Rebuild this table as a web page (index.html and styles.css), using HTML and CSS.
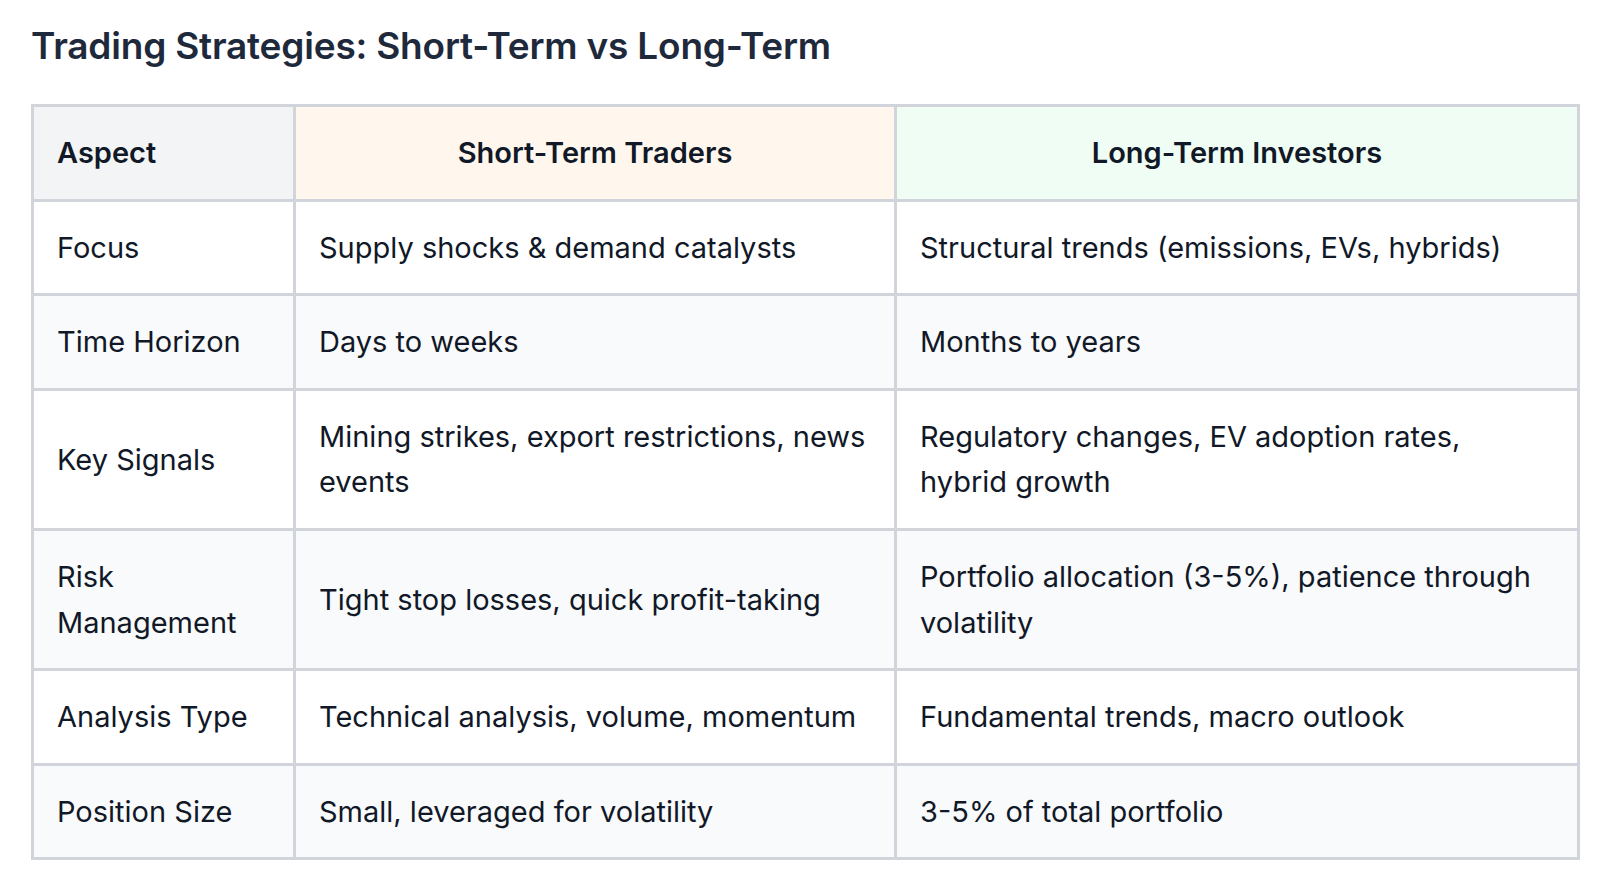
FILE: index.html
```html
<!DOCTYPE html>
<html lang="en">
<head>
<meta charset="utf-8">
<title>Trading Strategies</title>
<link rel="stylesheet" href="styles.css">
</head>
<body>
<main class="page">
  <h1 class="title">Trading Strategies: Short-Term vs Long-Term</h1>
  <table class="compare">
    <colgroup>
      <col class="c-aspect">
      <col class="c-short">
      <col class="c-long">
    </colgroup>
    <thead>
      <tr>
        <th class="h-aspect">Aspect</th>
        <th class="h-short">Short-Term Traders</th>
        <th class="h-long">Long-Term Investors</th>
      </tr>
    </thead>
    <tbody>
      <tr>
        <td>Focus</td>
        <td>Supply shocks &amp; demand catalysts</td>
        <td>Structural trends (emissions, EVs, hybrids)</td>
      </tr>
      <tr>
        <td>Time Horizon</td>
        <td>Days to weeks</td>
        <td>Months to years</td>
      </tr>
      <tr>
        <td>Key Signals</td>
        <td>Mining strikes, export restrictions, news events</td>
        <td>Regulatory changes, EV adoption rates, hybrid growth</td>
      </tr>
      <tr>
        <td>Risk Management</td>
        <td>Tight stop losses, quick profit-taking</td>
        <td>Portfolio allocation (3-5%), patience through volatility</td>
      </tr>
      <tr>
        <td>Analysis Type</td>
        <td>Technical analysis, volume, momentum</td>
        <td>Fundamental trends, macro outlook</td>
      </tr>
      <tr>
        <td>Position Size</td>
        <td>Small, leveraged for volatility</td>
        <td>3-5% of total portfolio</td>
      </tr>
    </tbody>
  </table>
</main>
</body>
</html>
```

FILE: styles.css
```css
* { box-sizing: border-box; }

html, body {
  margin: 0;
  padding: 0;
  background: #ffffff;
}

body {
  font-family: Inter, "Noto Sans", "Liberation Sans", sans-serif;
  color: #111827;
}

.page {
  padding: 20px 20px 0 31px;
}

.title {
  margin: 0 0 32px 0;
  font-size: 37px;
  line-height: 52px;
  font-weight: 600;
  color: #1e293b;
  letter-spacing: -0.2px;
}

.compare {
  width: 1549px;
  table-layout: fixed;
  border-collapse: separate;
  border-spacing: 0;
  border-left: 3px solid #d1d5db;
  border-top: 3px solid #d1d5db;
  font-size: 29px;
  line-height: 45.6px;
}

.c-aspect { width: 262px; }
.c-short { width: 601px; }
.c-long { width: 683px; }

.compare th,
.compare td {
  padding: 23px 23px;
  border-right: 3px solid #d1d5db;
  border-bottom: 3px solid #d1d5db;
  vertical-align: middle;
  text-align: left;
  color: #111827;
}

.compare th {
  font-weight: 600;
}

.h-aspect { background: #f3f4f6; }
.compare .h-short { background: #fff7ed; text-align: center; }
.compare .h-long { background: #f0fdf4; text-align: center; }

.compare tbody tr:nth-child(odd) td { background: #ffffff; }
.compare tbody tr:nth-child(even) td { background: #f9fafb; }
```
